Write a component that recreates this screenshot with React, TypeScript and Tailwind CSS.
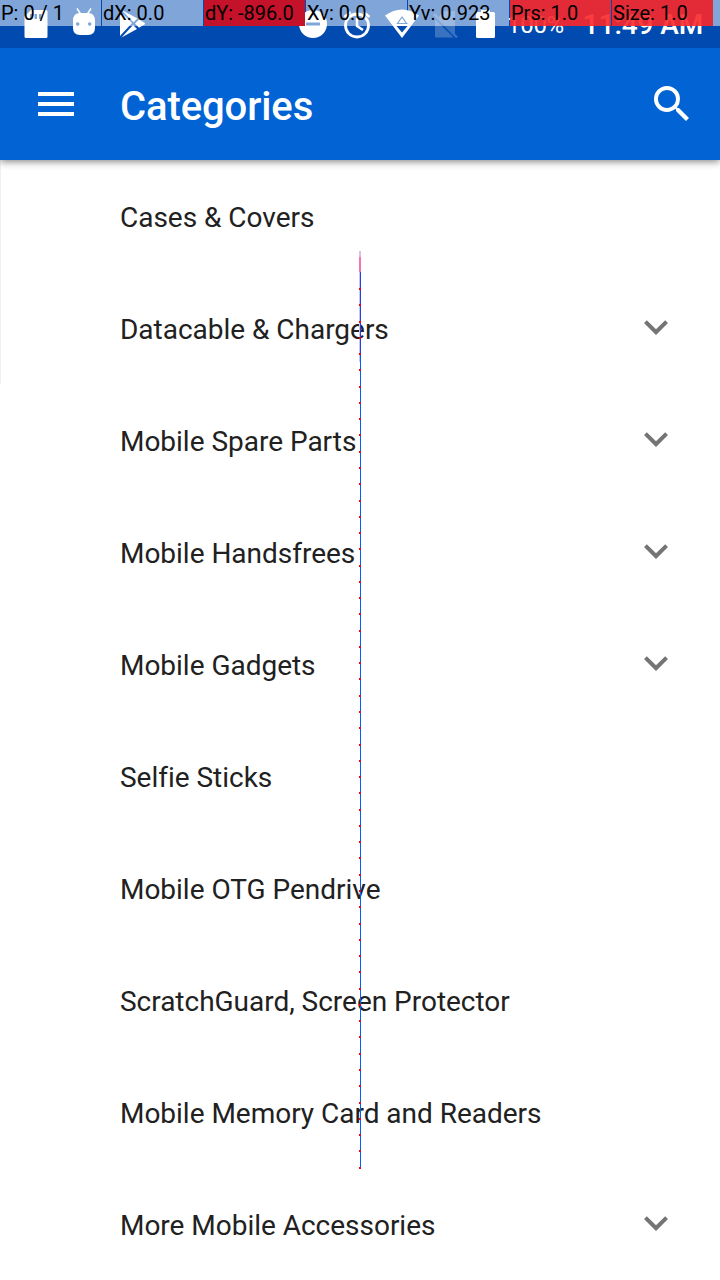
import React from "react";

const categories: { name: string; expandable?: boolean }[] = [
  { name: "Cases & Covers" },
  { name: "Datacable & Chargers", expandable: true },
  { name: "Mobile Spare Parts", expandable: true },
  { name: "Mobile Handsfrees", expandable: true },
  { name: "Mobile Gadgets", expandable: true },
  { name: "Selfie Sticks" },
  { name: "Mobile OTG Pendrive" },
  { name: "ScratchGuard, Screen Protector" },
  { name: "Mobile Memory Card and Readers" },
  { name: "More Mobile Accessories", expandable: true },
];

const readings: { text: string; tone: string }[] = [
  { text: "P: 0 / 1", tone: "bg-white/50" },
  { text: "dX: 0.0", tone: "bg-white/50" },
  { text: "dY: -896.0", tone: "bg-[#c4122a]" },
  { text: "Xv: 0.0", tone: "bg-white/50" },
  { text: "Yv: 0.923", tone: "bg-white/50" },
  { text: "Prs: 1.0", tone: "bg-[#fb282a]/90" },
  { text: "Size: 1.0", tone: "bg-[#fb282a]/90" },
];

function StatusIcons() {
  return (
    <svg className="block h-12 w-[500px] shrink-0" viewBox="0 0 500 48" fill="white">
      <path fillRule="evenodd" d="M31 10h15q1.500 0 1.500 1.500v25q0 1.500-1.500 1.500H26q-1.500 0-1.500-1.500V16.500zM30 14v5h2.500v-5zm4.500 0v5H37v-5zm4.500 0v5h2.500v-5z" />
      <path d="M77 8.500l4 6M91 8.500l-4 6" stroke="white" strokeWidth="1.500" />
      <path fillRule="evenodd" d="M73 21q0-8 7-8h8q7 0 7 8v7q0 7-7 7h-8q-7 0-7-7zM78.500 22.500a1.700 1.700 0 1 0 0 3 1.700 1.700 0 0 0 0-3zm12 0a1.700 1.700 0 1 0 0 3 1.700 1.700 0 0 0 0-3z" />
      <path d="M120 11l12 12-12 13zM121.500 10l16 8.500-4 3.800zM135 23.500l4-4 5.500 3.200q1.200.9 0 1.800l-5.500 3.200zM133 25l4 4-15.500 8.500z" />
      <path fillRule="evenodd" d="M313 10a14 14 0 1 0 0 28 14 14 0 0 0 0-28zm-7 12.500h14v3h-14z" />
      <circle cx="357" cy="25.500" r="11.500" fill="none" stroke="white" strokeWidth="2.800" />
      <path d="M357 18v8l6 4M344.500 17l6-5M363.500 12l6 5" fill="none" stroke="white" strokeWidth="2.500" />
      <path d="M385 15.500q17-12 34 0L402 38z" />
      <path d="M402 17l-4.500 6.500h9z" fill="none" stroke="#004ab0" strokeWidth="1.200" />
      <path d="M396.500 26h11l-5.500 6.500z" fill="#004ab0" />
      <g opacity=".22">
        <path d="M443 11h11q1 0 1 1v22l-16.500-16.500zM435 19l18.500 18.500H436q-1 0-1-1z" />
        <path d="M434 14l23 23.500" stroke="white" strokeWidth="2.500" />
      </g>
      <path d="M481 10h9v2h3.500q1.500 0 1.500 1.500v23q0 1.500-1.500 1.500h-16q-1.500 0-1.500-1.500v-23q0-1.500 1.500-1.500H481z" />
    </svg>
  );
}

function PointerTrace() {
  const dots = Array.from({ length: 55 }, (_, i) => 288 + i * 16.27);
  return (
    <svg className="pointer-events-none absolute left-0 top-0 h-[1280px] w-[720px]" viewBox="0 0 720 1280" shapeRendering="crispEdges">
      <rect x="359" y="251" width="2" height="6" fill="#dfbce2" />
      <rect x="359" y="257" width="2" height="15" fill="#f475ab" />
      <rect x="359" y="272" width="1" height="90" fill="#c7c7f1" />
      <rect x="360" y="272" width="1" height="84" fill="#2440e8" />
      <rect x="360" y="356" width="1" height="812" fill="#0060ff" />
      {dots.map((y) => (
        <rect key={y} x="359" y={Math.round(y)} width="2" height="2" fill="#f00018" />
      ))}
    </svg>
  );
}

export default function App() {
  return (
    <div className="relative flex h-[1280px] w-[720px] flex-col overflow-hidden bg-white font-['Roboto',sans-serif]">
      <div className="relative z-20 flex h-12 shrink-0 bg-[#004ab0] text-white">
        <StatusIcons />
        <div className="flex h-12 flex-1 items-start whitespace-nowrap">
          <span className="ml-[7px] mt-[11px] text-[24px] leading-7 tracking-[-0.3px]">100%</span>
          <span className="ml-[19px] mt-[9px] text-[28px] font-medium leading-8 tracking-[-0.1px]">11:49 AM</span>
        </div>
      </div>
      <header className="relative z-10 flex h-28 shrink-0 items-center bg-[#0264d4] pl-[38px] pr-6 text-white shadow-[0_2px_7px_rgba(0,0,0,0.45)]">
        <button aria-label="Menu" className="mr-[46px] flex w-9 flex-col gap-1.5">
          <span className="h-1 bg-white" />
          <span className="h-1 bg-white" />
          <span className="h-1 bg-white" />
        </button>
        <h1 className="mt-1.5 flex-1 text-[40px] font-medium leading-[48px] tracking-[-0.1px]">Categories</h1>
        <button aria-label="Search">
          <svg className="block h-12 w-12" viewBox="0 0 24 24" fill="white">
            <path d="M15.500 14h-.79l-.28-.27A6.471 6.471 0 0 0 16 9.500 6.500 6.500 0 1 0 9.500 16c1.610 0 3.090-.59 4.230-1.570l.27.28v.79l5 4.990L20.490 19l-4.990-5zm-6 0C7.010 14 5 11.990 5 9.500S7.010 5 9.500 5 14 7.010 14 9.500 11.990 14 9.500 14z" />
          </svg>
        </button>
      </header>
      <ul className="flex flex-col">
        {categories.map(({ name, expandable }) => (
          <li
            key={name}
            className="flex h-28 items-center justify-between border-l border-white pl-[119px] pr-10 text-[28px] text-[#212121] nth-[-n+2]:border-[#f0f0f0]"
          >
            <span className="mt-1 whitespace-nowrap tracking-[-0.02px]">{name}</span>
            {expandable && (
              <svg className="-mt-0.5 h-12 w-12" viewBox="0 0 24 24" fill="#757575">
                <path d="M16.590 8.590L12 13.170 7.410 8.590 6 10l6 6 6-6z" />
              </svg>
            )}
          </li>
        ))}
      </ul>
      <PointerTrace />
      <div className="absolute left-0 top-0 z-30 flex h-[26px] w-[720px] gap-px text-[20px] leading-[26px] text-black">
        {readings.map(({ text, tone }) => (
          <span key={text} className={`w-[101px] shrink-0 whitespace-nowrap pl-px ${tone}`}>
            {text}
          </span>
        ))}
        <span className="-ml-px flex-1 bg-white/50" />
      </div>
    </div>
  );
}
